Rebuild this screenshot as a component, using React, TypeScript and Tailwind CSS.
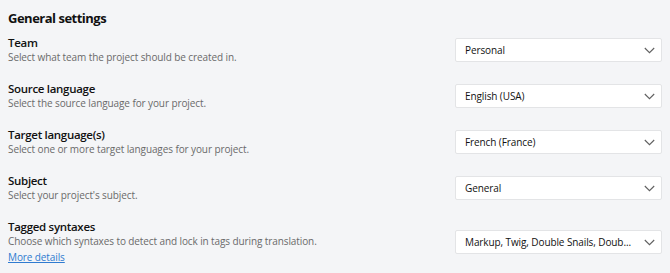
import React from "react";

const rows = [
  { label: "Team", desc: "Select what team the project should be created in.", value: "Personal" },
  { label: "Source language", desc: "Select the source language for your project.", value: "English (USA)" },
  { label: "Target language(s)", desc: "Select one or more target languages for your project.", value: "French (France)" },
  { label: "Subject", desc: "Select your project's subject.", value: "General" },
  { label: "Tagged syntaxes", desc: "Choose which syntaxes to detect and lock in tags during translation.", value: "Markup, Twig, Double Snails, Doub...", link: true },
];

function Chevron() {
  return (
    <svg width="11" height="7" viewBox="0 0 11 7" fill="none">
      <path d="M0.8 1 L5.5 5.7 L10.2 1" stroke="#606060" strokeWidth="1.1" />
    </svg>
  );
}

export default function App() {
  return (
    <div className="w-[670px] h-[273px] bg-[#f4f5f7] px-2 pt-[9px] overflow-hidden" style={{ fontFamily: '"Open Sans", "Noto Sans", sans-serif' }}>
      <h1 className="text-[13px] font-bold tracking-[-0.5px] text-[#111] leading-[18px]">General settings</h1>
      <div className="mt-[8px] flex flex-col gap-[16px]">
        {rows.map((r) => (
          <div key={r.label} className="flex items-center justify-between">
            <div className="flex flex-col">
              <div className="text-[11.5px] font-semibold tracking-[-0.3px] text-[#111] leading-[15px]">{r.label}</div>
              <div className="text-[10px] tracking-[-0.1px] text-[#6a6a6a] leading-[15px]">{r.desc}</div>
              {r.link && (
                <a className="text-[10px] tracking-[-0.1px] text-[#2f7bd0] underline leading-[16px]" href="#">More details</a>
              )}
            </div>
            <div className="w-[207px] h-[24px] shrink-0 bg-white border border-[#e3e4e6] rounded-[2px] flex items-center justify-between pl-[9px] pr-[6px]">
              <span className="text-[10px] tracking-[-0.1px] text-[#111] whitespace-nowrap">{r.value}</span>
              <Chevron />
            </div>
          </div>
        ))}
      </div>
    </div>
  );
}
